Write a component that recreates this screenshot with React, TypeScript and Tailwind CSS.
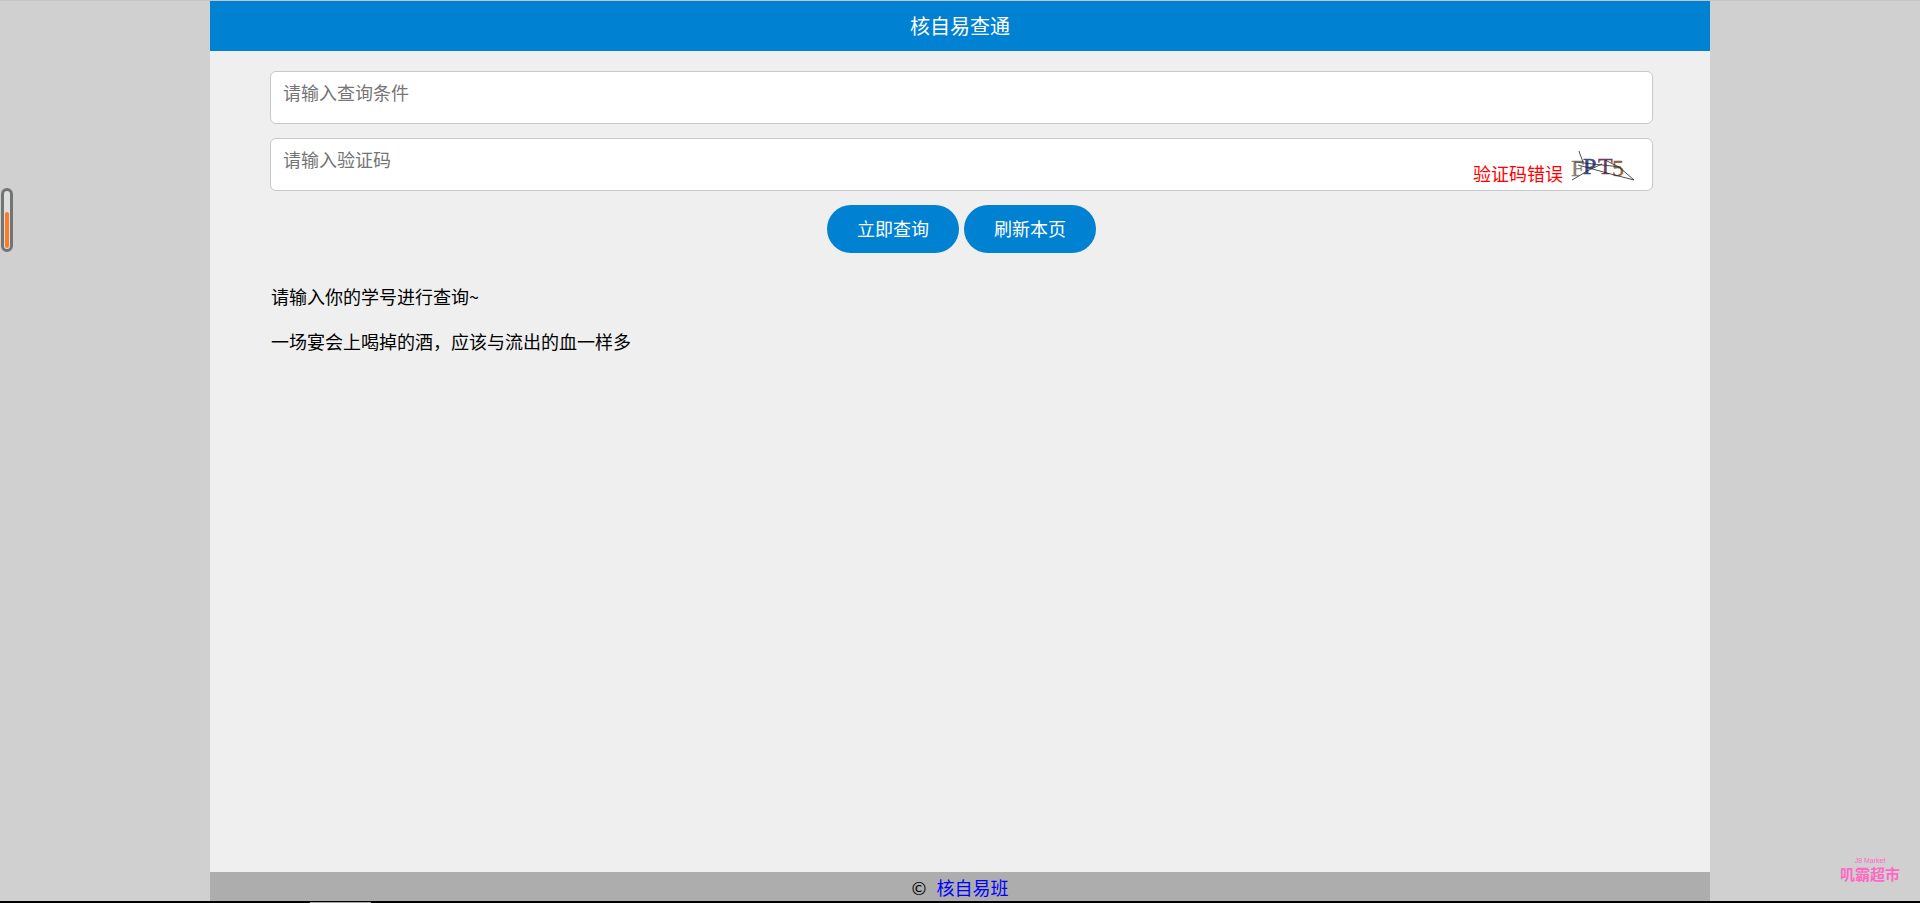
const blue = "bg-[#0081d1]";
const field =
  "block w-full rounded-md border border-[#c8c8c8] bg-white px-3 pt-2 pb-[19px] text-lg leading-6 text-black placeholder:text-[#757575] outline-none";
const pill = `${blue} h-12 rounded-full px-[30px] pb-0.5 text-lg text-white cursor-pointer`;

function Captcha() {
  return (
    <svg
      className="h-10 w-[70px]"
      viewBox="0 0 70 40"
      role="img"
      aria-label="验证码"
      fontFamily="'Liberation Serif', serif"
    >
      <g fontSize="24">
        <text x="0" y="31" fill="#8a8069" stroke="#8a8069" strokeWidth="0.3">F</text>
        <text x="12" y="29" fill="#3c4a84" stroke="#3c4a84" strokeWidth="0.6">P</text>
        <text x="27" y="29" fill="#6a3f66" stroke="#6a3f66" strokeWidth="0.4">T</text>
        <text x="41" y="31" fill="#8f6238" stroke="#8f6238" strokeWidth="0.3">5</text>
      </g>
      <g stroke="#222228" strokeWidth="0.8" fill="none">
        <path d="M8 6 L9 9 L12 17" />
        <path d="M1 35 L18 25 L31 19" />
        <path d="M34 15 L48 22 L63 35" />
        <path d="M4 17 L22 19 L50 22" />
        <path d="M7 20 L36 28 L63 35" />
      </g>
    </svg>
  );
}

function BatteryWidget() {
  return (
    <div className="absolute top-[187px] left-px flex h-16 w-3 flex-col justify-end rounded-full border-3 border-[#717573] bg-[#dedede] p-px">
      <div className="h-9 rounded-full bg-[#ff7a26]" />
    </div>
  );
}

function Watermark() {
  return (
    <div className="absolute right-5 bottom-5 flex flex-col items-center text-[#ff69c6]">
      <span className="font-['Liberation_Sans',sans-serif] text-[7px] leading-[8px]">J8 Market</span>
      <span className="text-[15px] leading-[18px] font-bold">叽霸超市</span>
    </div>
  );
}

export default function App() {
  return (
    <div className="relative flex min-h-screen flex-col border-t border-[#c4c4c4] bg-[#d0d0d0] font-['Noto_Sans_CJK_SC',sans-serif] text-lg text-black">
      <div className="mx-auto flex w-full max-w-[1500px] grow flex-col bg-[#efefef]">
        <header className={`${blue} flex h-[50px] items-center justify-center`}>
          <h1 className="text-xl font-normal text-white">核自易查通</h1>
        </header>

        <main className="grow pt-5 pr-[57px] pl-[60px]">
          <form className="flex flex-col gap-[14px]" onSubmit={(e) => e.preventDefault()}>
            <input className={field} type="text" aria-label="查询条件" placeholder="请输入查询条件" />
            <div className="relative">
              <input className={field} type="text" aria-label="验证码" placeholder="请输入验证码" />
              <div className="absolute inset-y-0 right-3 flex items-center gap-2">
                <span className="pt-4 text-[#ff0000]">验证码错误</span>
                <Captcha />
              </div>
            </div>
            <div className="flex justify-center gap-[5px]">
              <button className={pill} type="submit">立即查询</button>
              <button className={pill} type="button">刷新本页</button>
            </div>
          </form>

          <div className="mt-[29px] flex flex-col gap-[17px] px-px leading-7">
            <p>请输入你的学号进行查询~</p>
            <p>一场宴会上喝掉的酒，应该与流出的血一样多</p>
          </div>
        </main>

        <footer className="flex h-[29px] items-center justify-center gap-[10px] bg-[#adadad]">
          <span>©</span>
          <a className="text-[#0000ff]" href="#">核自易班</a>
        </footer>
      </div>
      <div className="h-0.5 bg-black pt-px pl-[310px]">
        <div className="h-px w-[61px] bg-[#a8a8a8]" />
      </div>

      <BatteryWidget />
      <Watermark />
    </div>
  );
}
